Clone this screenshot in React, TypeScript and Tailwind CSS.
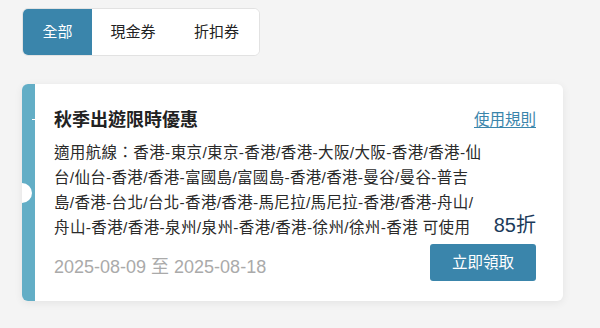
import { useState } from "react";

const tabs = [
  { key: "all", label: "全部", w: "w-[69px]" },
  { key: "cash", label: "現金券", w: "w-[82px]" },
  { key: "discount", label: "折扣券", w: "w-[85px]" },
];

// each line stretched to the width it has in the design
const routeLines = [
  { text: "適用航線：香港-東京/東京-香港/香港-大阪/大阪-香港/香港-仙", w: "w-[427px]" },
  { text: "台/仙台-香港/香港-富國島/富國島-香港/香港-曼谷/曼谷-普吉", w: "w-[414px]" },
  { text: "島/香港-台北/台北-香港/香港-馬尼拉/馬尼拉-香港/香港-舟山/", w: "w-[419px]" },
  { text: "舟山-香港/香港-泉州/泉州-香港/香港-徐州/徐州-香港 可使用", w: "w-[416px]" },
];

export default function App() {
  const [active, setActive] = useState("all");

  return (
    <div
      className="h-[328px] w-[600px] overflow-hidden bg-[#f4f4f4] pl-[22px] pt-[8px]"
      style={{ fontFamily: '"Liberation Sans", "Noto Sans CJK TC", sans-serif' }}
    >
      {/* Tabs */}
      <div className="flex h-[48px] w-fit overflow-hidden rounded-md border border-[#e2e2e2] bg-white">
        {tabs.map((t) => (
          <button
            key={t.key}
            onClick={() => setActive(t.key)}
            className={`${t.w} flex items-center justify-center text-[15px] ${
              active === t.key ? "bg-[#3a85ab] text-white" : "bg-white text-[#222]"
            }`}
          >
            {t.label}
          </button>
        ))}
      </div>

      {/* Coupon card */}
      <div className="relative mt-[28px] flex w-[541px] overflow-hidden rounded-md bg-white shadow-[0_2px_8px_rgba(0,0,0,0.07)]">
        <div className="w-[13px] shrink-0 bg-[#63aec6]" />
        <div className="absolute left-[-10px] top-[99px] h-5 w-5 rounded-full bg-white" />
        <div className="absolute left-[10px] top-[35px] h-px w-[3px] bg-white" />

        <div className="flex-1 pb-5 pl-[19px] pr-[27px] pt-6">
          <div className="flex h-6 items-center justify-between">
            <h2 className="text-[18px] font-bold text-[#222]">秋季出遊限時優惠</h2>
            <a href="#" className="text-[15.5px] text-[#3a85ab] underline underline-offset-2">
              使用規則
            </a>
          </div>

          <div className="mt-[7.5px] flex items-end justify-between">
            <p lang="zh-Hant" className="text-[15.5px] leading-[25px] text-[#2a2a2a]">
              {routeLines.map((line, i) => (
                <span key={i} className={`${line.w} block text-justify [text-align-last:justify]`}>
                  {line.text}
                </span>
              ))}
            </p>
            <div className="pb-[2px] text-[20px] leading-[25px] text-[#1c3b5a]">85折</div>
          </div>

          <div className="mt-[4px] flex items-end justify-between">
            <div className="text-[18px] leading-[27px] text-[#aaa]">2025-08-09 至 2025-08-18</div>
            <button className="h-[37.5px] w-[106px] rounded-[3px] bg-[#3a85ab] text-[15.5px] text-white">
              立即領取
            </button>
          </div>
        </div>
      </div>
    </div>
  );
}
